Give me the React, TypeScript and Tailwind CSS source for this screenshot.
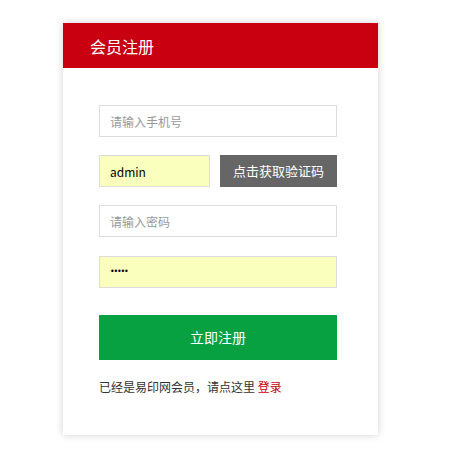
export default function App() {
  const font = { fontFamily: '"Noto Sans CJK SC", "Noto Sans", sans-serif' };

  return (
    <div className="min-h-[464px] w-[455px] bg-white pl-[63px] pt-[23px]" style={font}>
      <div className="flex h-[412px] w-[315px] flex-col bg-white shadow-[0_0_8px_rgba(0,0,0,0.18)]">
        {/* Header */}
        <div className="flex h-[45px] items-center bg-[#c8000f] px-[27px]">
          <h2 className="text-[16px] leading-none text-white">会员注册</h2>
        </div>

        {/* Form */}
        <div className="flex flex-col px-[36px] pt-[37px]">
          <input
            className="h-[32px] w-[238px] border border-[#dddddd] bg-white px-[10px] text-[12px] text-[#333] outline-none placeholder:text-[#999]"
            placeholder="请输入手机号"
          />

          <div className="mt-[18px] flex items-center gap-[10px]">
            <input
              className="h-[32px] w-[111px] border border-[#dddddd] bg-[#faffbd] px-[10px] text-[12px] text-black outline-none"
              defaultValue="admin"
              readOnly
            />
            <button className="h-[32px] w-[117px] bg-[#666666] text-[13px] text-white">点击获取验证码</button>
          </div>

          <input
            className="mt-[18px] h-[32px] w-[238px] border border-[#dddddd] bg-white px-[10px] text-[12px] text-[#333] outline-none placeholder:text-[#999]"
            placeholder="请输入密码"
          />

          <div className="mt-[19px] flex h-[32px] w-[238px] items-center border border-[#dddddd] bg-[#faffbd] px-[10px] font-['DejaVu_Sans'] text-[8px] tracking-[-1.2px] text-black">
            •••••
          </div>

          <button className="mt-[27px] h-[45px] w-[238px] bg-[#07a142] text-[14px] text-white">立即注册</button>

          <p className="mt-[18px] text-[12px] text-[#333]">
            已经是易印网会员，请点这里 <a className="text-[#c8000f]">登录</a>
          </p>
        </div>
      </div>
    </div>
  );
}
